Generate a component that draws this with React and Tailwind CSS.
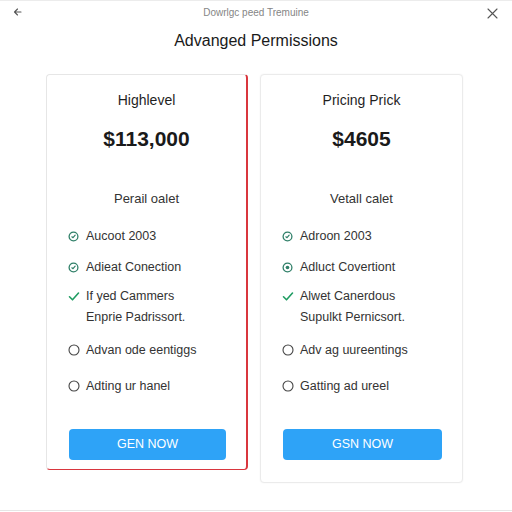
import React from "react";

const CircleCheck = () => (
  <svg width="11" height="11" viewBox="0 0 12 12" className="shrink-0">
    <circle cx="6" cy="6" r="4.8" fill="none" stroke="#2f7f68" strokeWidth="1.4" />
    <path d="M4.2 6.3 L5.5 7.3 L7.8 4.6" fill="none" stroke="#2f7f68" strokeWidth="1.3" strokeLinecap="round" strokeLinejoin="round" />
  </svg>
);

const CircleDot = () => (
  <svg width="11" height="11" viewBox="0 0 12 12" className="shrink-0">
    <circle cx="6" cy="6" r="4.8" fill="none" stroke="#2f7f68" strokeWidth="1.4" />
    <circle cx="6" cy="6" r="2" fill="#2f7f68" />
  </svg>
);

const Check = () => (
  <svg width="12" height="11" viewBox="0 0 12 11" className="shrink-0">
    <path d="M1.5 5.8 L4.5 8.8 L10.5 2" fill="none" stroke="#1f9c62" strokeWidth="1.6" strokeLinecap="round" strokeLinejoin="round" />
  </svg>
);

const Empty = () => (
  <svg width="12" height="12" viewBox="0 0 12 12" className="shrink-0">
    <circle cx="6" cy="6" r="5" fill="none" stroke="#444" strokeWidth="1.1" />
  </svg>
);

function Card({ title, price, sub, items, btn, className, secondIcon }) {
  return (
    <div className={"flex flex-col rounded-[4px] bg-white " + className}>
      <div className="mt-[17px] text-center text-[14px] leading-[16px] text-[#1f1f1f]">{title}</div>
      <div className="mt-[17px] text-center text-[21px] font-bold leading-[28px] text-[#1a1a1a]">{price}</div>
      <div className="mt-[38px] text-center text-[13px] leading-[16px] text-[#333]">{sub}</div>
      <div className="ml-[21px] flex flex-col text-[12.5px] leading-[16px] text-[#333]">
        <div className="mt-[21px] flex items-center gap-[7px]"><CircleCheck /><span>{items[0]}</span></div>
        <div className="mt-[15px] flex items-center gap-[7px]">{secondIcon === "dot" ? <CircleDot /> : <CircleCheck />}<span>{items[1]}</span></div>
        <div className="mt-[13px] flex items-center gap-[6px]"><Check /><span>{items[2]}</span></div>
        <div className="mt-[5px] pl-[18px]">{items[3]}</div>
        <div className="mt-[17px] flex items-center gap-[6px]"><Empty /><span>{items[4]}</span></div>
        <div className="mt-[20px] flex items-center gap-[6px]"><Empty /><span>{items[5]}</span></div>
      </div>
      <div className="ml-[22px] mr-[20px] mt-[35px] flex h-[31px] items-center justify-center rounded-[4px] bg-[#2ea3f7] text-[12.5px] font-medium text-white">
        {btn}
      </div>
    </div>
  );
}

export default function App() {
  return (
    <div className="relative h-[512px] w-[512px] overflow-hidden bg-white" style={{ fontFamily: '"Liberation Sans", Arial, sans-serif' }}>
      <div className="h-px w-full bg-[#ececec]" />
      <div className="relative flex h-[20px] items-center justify-center">
        <span className="mt-[2px] text-[10px] text-[#858585]">Dowrlgc peed Tremuine</span>
        <svg className="absolute left-[13px] top-[6px]" width="9" height="10" viewBox="0 0 9 10">
          <path d="M8 5 H1.5 M4.5 2 L1.5 5 L4.5 8" fill="none" stroke="#555" strokeWidth="1.1" strokeLinecap="round" strokeLinejoin="round" />
        </svg>
        <svg className="absolute right-[14px] top-[7px]" width="11" height="11" viewBox="0 0 11 11">
          <path d="M1 1 L10 10 M10 1 L1 10" fill="none" stroke="#555" strokeWidth="1.1" strokeLinecap="round" />
        </svg>
      </div>
      <div className="mt-[10px] text-center text-[16px] leading-[20px] text-[#1a1a1a]">Advanged Permissions</div>
      <div className="mt-[23px] flex items-start gap-[12px] pl-[46px]">
        <Card
          className="h-[396px] w-[202px] border border-[#e6e6e6] border-r-2 border-b-[1.5px] border-r-[#d9363e] border-b-[#d9363e]"
          title="Highlevel"
          price="$113,000"
          sub="Perail oalet"
          items={["Aucoot 2003", "Adieat Conection", "If yed Cammers", "Enprie Padrissort.", "Advan ode eentiggs", "Adting ur hanel"]}
          btn="GEN NOW"
        />
        <Card
          className="h-[409px] w-[203px] border border-[#ebebeb] shadow-[0_0_2px_rgba(0,0,0,0.05)]"
          title="Pricing Prick"
          price="$4605"
          sub="Vetall calet"
          items={["Adroon 2003", "Adluct Covertiont", "Alwet Canerdous", "Supulkt Pernicsort.", "Adv ag uureentings", "Gatting ad ureel"]}
          btn="GSN NOW"
          secondIcon="dot"
        />
      </div>
      <div className="absolute bottom-[1px] left-0 h-px w-full bg-[#e6e6e6]" />
    </div>
  );
}
